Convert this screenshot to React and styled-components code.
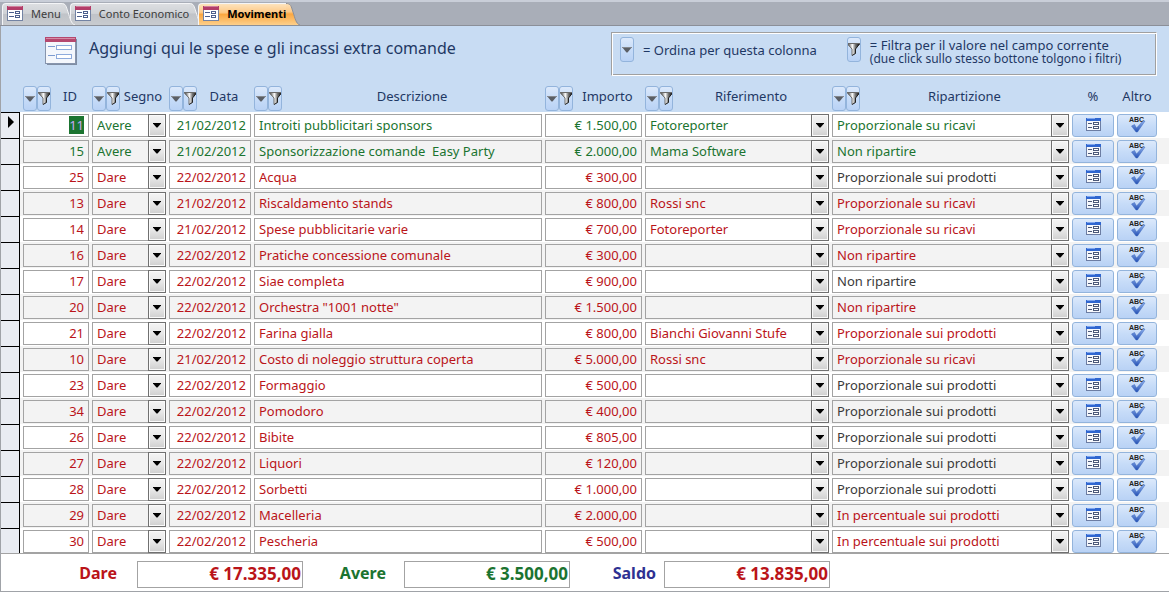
import React, { useId } from "react"
import styled, { createGlobalStyle, css } from "styled-components"

const colors = {
  page: "#ffffff",
  strip: "#a9aeb8",
  header: "#c8dcf3",
  navy: "#1f3864",
  red: "#ba1419",
  green: "#1b7430",
  violet: "#2e3192",
  dark: "#3a3a3a",
  line: "#a3a3a3",
  stripe: "#f3f3f3",
}

const columns = [
  { key: "id", label: "ID", width: 69 },
  { key: "segno", label: "Segno", width: 77 },
  { key: "data", label: "Data", width: 85 },
  { key: "descrizione", label: "Descrizione" },
  { key: "importo", label: "Importo", width: 100 },
  { key: "riferimento", label: "Riferimento", width: 187 },
  { key: "ripartizione", label: "Ripartizione", width: 240 },
]

const RICAVI = "Proporzionale su ricavi"
const PRODOTTI = "Proporzionale sui prodotti"
const NON = "Non ripartire"
const PERCENTUALE = "In percentuale sui prodotti"

// id, segno, data, descrizione, importo, riferimento, ripartizione, colour of ripartizione
const rows = [
  [11, "Avere", "21/02/2012", "Introiti pubblicitari sponsors", "€ 1.500,00", "Fotoreporter", RICAVI, "green"],
  [15, "Avere", "21/02/2012", "Sponsorizzazione comande  Easy Party", "€ 2.000,00", "Mama Software", NON, "green"],
  [25, "Dare", "22/02/2012", "Acqua", "€ 300,00", "", PRODOTTI, "dark"],
  [13, "Dare", "21/02/2012", "Riscaldamento stands", "€ 800,00", "Rossi snc", RICAVI, "red"],
  [14, "Dare", "21/02/2012", "Spese pubblicitarie varie", "€ 700,00", "Fotoreporter", RICAVI, "red"],
  [16, "Dare", "22/02/2012", "Pratiche concessione comunale", "€ 300,00", "", NON, "red"],
  [17, "Dare", "22/02/2012", "Siae completa", "€ 900,00", "", NON, "dark"],
  [20, "Dare", "22/02/2012", 'Orchestra "1001 notte"', "€ 1.500,00", "", NON, "red"],
  [21, "Dare", "22/02/2012", "Farina gialla", "€ 800,00", "Bianchi Giovanni Stufe", PRODOTTI, "red"],
  [10, "Dare", "21/02/2012", "Costo di noleggio struttura coperta", "€ 5.000,00", "Rossi snc", RICAVI, "red"],
  [23, "Dare", "22/02/2012", "Formaggio", "€ 500,00", "", PRODOTTI, "dark"],
  [34, "Dare", "22/02/2012", "Pomodoro", "€ 400,00", "", PRODOTTI, "dark"],
  [26, "Dare", "22/02/2012", "Bibite", "€ 805,00", "", PRODOTTI, "dark"],
  [27, "Dare", "22/02/2012", "Liquori", "€ 120,00", "", PRODOTTI, "dark"],
  [28, "Dare", "22/02/2012", "Sorbetti", "€ 1.000,00", "", PRODOTTI, "dark"],
  [29, "Dare", "22/02/2012", "Macelleria", "€ 2.000,00", "", PERCENTUALE, "red"],
  [30, "Dare", "22/02/2012", "Pescheria", "€ 500,00", "", PERCENTUALE, "red"],
]

const segni = ["Avere", "Dare"]
const riferimenti = ["", "Fotoreporter", "Mama Software", "Rossi snc", "Bianchi Giovanni Stufe"]
const ripartizioni = [RICAVI, PRODOTTI, NON, PERCENTUALE]

const totals = [
  { label: "Dare", value: "€ 17.335,00", color: "red", gap: 20 },
  { label: "Avere", value: "€ 3.500,00", color: "green", gap: 18 },
  { label: "Saldo", value: "€ 13.835,00", color: "violet", valueColor: "red", gap: 8 },
]

const FormIcon = () => (
  <svg width="16" height="15" viewBox="0 0 16 15" aria-hidden="true">
    <rect x="0.5" y="0.5" width="15" height="14" fill="#fff" stroke="#7383a3" />
    <rect x="0" y="0" width="16" height="4" fill="#b33c68" />
    <path d="M1 0.5h14" stroke="#cf7f9c" />
    <path d="M2 6.5h5M2 10.5h5" stroke="#4c5f8d" />
    <rect x="8.5" y="5.5" width="4" height="2" fill="#fff" stroke="#4c5f8d" />
    <rect x="8.5" y="9.5" width="4" height="2" fill="#fff" stroke="#4c5f8d" />
  </svg>
)

const SplitIcon = () => (
  <svg width="15" height="13" viewBox="0 0 15 13" aria-hidden="true">
    <rect x="0.5" y="0.5" width="14" height="12" fill="#f6f8fc" stroke="#6c7da3" />
    <rect x="0" y="0" width="15" height="3" fill="#2f66d0" />
    <path d="M1 0.5h8" stroke="#7fa6ee" />
    <path d="M2 5.5h4M2 9.5h4" stroke="#4b5878" />
    <rect x="7.5" y="4.5" width="5" height="2" fill="#fff" stroke="#4b5878" />
    <rect x="7.5" y="8.5" width="5" height="2" fill="#fff" stroke="#4b5878" />
  </svg>
)

const LargeFormIcon = () => (
  <svg width="32" height="28" viewBox="0 0 32 28" aria-hidden="true">
    <rect x="2" y="2" width="30" height="26" fill="#7f8da3" />
    <rect x="0.5" y="0.5" width="30" height="26" fill="#f4f7fc" stroke="#8795ad" />
    <rect x="0" y="0" width="31" height="5" fill="#b5486f" />
    <path d="M1 1.5h29" stroke="#d58ba6" />
    <path d="M3 9.5h7M3 18.5h7" stroke="#7c9bd0" />
    <rect x="11.5" y="8.5" width="15" height="4" fill="#fff" stroke="#8eabdc" />
    <rect x="11.5" y="17.5" width="15" height="4" fill="#fff" stroke="#8eabdc" />
  </svg>
)

const SortIcon = () => (
  <svg width="10" height="6" viewBox="0 0 10 6" aria-hidden="true">
    <path d="M0 0h10L5.5 5.5h-1z" fill="#5b5f66" />
    <path d="M0 0.5h10" stroke="#85898f" />
  </svg>
)

const FunnelIcon = () => {
  const id = useId()
  return (
    <svg width="13" height="13" viewBox="0 0 13 13" aria-hidden="true">
      <defs>
        <linearGradient id={id}>
          <stop offset="0.1" stopColor="#666" />
          <stop offset="0.4" stopColor="#fff" />
          <stop offset="0.65" stopColor="#777" />
          <stop offset="1" stopColor="#111" />
        </linearGradient>
      </defs>
      <path d="M0.5 0.5h12v1L8.5 6v4.5L5 12.5V6L0.5 1.500z" fill={`url(#${id})`} />
      <path d="M0 0.5h13M0.5 1l4.500 5v6.5" fill="none" stroke="#6a6a6a" />
      <path d="M5 12.500l3.5-2V6L12.5 1" fill="none" stroke="#222" />
    </svg>
  )
}

const ArrowIcon = () => (
  <svg width="8" height="5" viewBox="0 0 8 5" aria-hidden="true">
    <path d="M0 0h8v0.500L4.500 4.500h-1L0 0.500z" fill="#000" />
  </svg>
)

const AbcIcon = () => {
  const id = useId()
  return (
    <svg width="18" height="17" viewBox="0 0 18 17" aria-hidden="true">
      <defs>
        <linearGradient id={id} x2="0" y2="1">
          <stop offset="0" stopColor="#8fb2ee" />
          <stop offset="1" stopColor="#2450b4" />
        </linearGradient>
      </defs>
      <text x="1" y="6" fontFamily="Liberation Sans, sans-serif" fontSize="7" fontWeight="700" fill="#222">
        ABC
      </text>
      <path d="M3.500 10l3-1.5L8.5 12l6.500-7h2L9.500 16h-1.500z" fill={`url(#${id})`} stroke="#3f68bd" strokeWidth="0.5" />
    </svg>
  )
}

const Tab = ({ label, active }) => {
  const id = useId()
  return (
    <TabButton type="button" role="tab" aria-selected={!!active}>
      <TabBody active={active}>
        <FormIcon />
        {label}
      </TabBody>
      <svg width="14" height="22" viewBox="0 0 14 22" aria-hidden="true">
        <defs>
          <linearGradient id={id} x2="0" y2="1">
            {(active ? activeStops : idleStops).map(([offset, color]) => (
              <stop key={offset} offset={offset} stopColor={color} />
            ))}
          </linearGradient>
        </defs>
        <path d="M0 0C5 0 5 3 7 9s3 12 7 13H0z" fill={`url(#${id})`} />
        <path d="M0 0.5C5 0.5 5 3 7 9s3 12 7 13" fill="none" stroke={active ? "#8b8f98" : "#f4f5f7"} />
      </svg>
    </TabButton>
  )
}

const Combo = ({ value, options, color, label }) => (
  <ComboBox>
    <Select defaultValue={value} textColor={color} aria-label={label}>
      {options.map(option => (
        <option key={option}>{option}</option>
      ))}
    </Select>
    <ComboArrow>
      <ArrowIcon />
    </ComboArrow>
  </ComboBox>
)

const ColumnTools = ({ label }) => (
  <Tools>
    <ToolButton type="button" aria-label={`Ordina per ${label}`}>
      <SortIcon />
    </ToolButton>
    <ToolButton type="button" aria-label={`Filtra per ${label}`}>
      <FunnelIcon />
    </ToolButton>
  </Tools>
)

const Movement = ({ row, current }) => {
  const [id, segno, data, descrizione, importo, riferimento, ripartizione, shareColor] = row
  const color = segno === "Avere" ? "green" : "red"
  return (
    <Row>
      <Selector>
        {current && (
          <svg width="6" height="12" viewBox="0 0 6 12" aria-hidden="true">
            <path d="M0 0l6 6-6 6z" fill="#000" />
          </svg>
        )}
      </Selector>
      <Cell>
        <Field
          defaultValue={id}
          textColor={color}
          align="right"
          aria-label="ID"
          autoFocus={current}
          onFocus={e => e.target.select()}
        />
      </Cell>
      <Cell>
        <Combo value={segno} options={segni} color={color} label="Segno" />
      </Cell>
      <Cell>
        <Field defaultValue={data} textColor={color} align="right" aria-label="Data" />
      </Cell>
      <Cell>
        <Field defaultValue={descrizione} textColor={color} aria-label="Descrizione" />
      </Cell>
      <Cell>
        <Field defaultValue={importo} textColor={color} align="right" aria-label="Importo" />
      </Cell>
      <Cell>
        <Combo value={riferimento} options={riferimenti} color={color} label="Riferimento" />
      </Cell>
      <Cell>
        <Combo value={ripartizione} options={ripartizioni} color={shareColor} label="Ripartizione" />
      </Cell>
      <Cell>
        <ActionButton type="button" aria-label="Percentuali">
          <SplitIcon />
        </ActionButton>
      </Cell>
      <Cell>
        <ActionButton type="button" aria-label="Altro">
          <AbcIcon />
        </ActionButton>
      </Cell>
      <td />
    </Row>
  )
}

const App = () => {
  return (
    <>
      <GlobalStyle />
      <TabStrip role="tablist">
        <Tab label="Menu" />
        <Tab label="Conto Economico" />
        <Tab label="Movimenti" active />
      </TabStrip>
      <Main>
        <Header>
          <LargeFormIcon />
          <Title>Aggiungi qui le spese e gli incassi extra comande</Title>
          <Legend>
            <ToolButton type="button" aria-label="Ordina">
              <SortIcon />
            </ToolButton>
            <LegendText>= Ordina per questa colonna</LegendText>
            <ToolButton type="button" aria-label="Filtra">
              <FunnelIcon />
            </ToolButton>
            <LegendNote>
              <span>= Filtra per il valore nel campo corrente</span>
              <small>(due click sullo stesso bottone tolgono i filtri)</small>
            </LegendNote>
          </Legend>
        </Header>
        <Table>
          <colgroup>
            <Col size={19} />
            {columns.map(({ key, width }) => (
              <Col key={key} size={width} />
            ))}
            <Col size={45} />
            <Col size={43} />
            <Col size={12} />
          </colgroup>
          <thead>
            <tr>
              <HeadCell />
              {columns.map(({ key, label }) => (
                <HeadCell key={key} scope="col">
                  <HeadContent>
                    <ColumnTools label={label} />
                    <HeadLabel>{label}</HeadLabel>
                  </HeadContent>
                </HeadCell>
              ))}
              <HeadCell scope="col">
                <HeadContent>
                  <HeadLabel>%</HeadLabel>
                </HeadContent>
              </HeadCell>
              <HeadCell scope="col">
                <HeadContent>
                  <HeadLabel>Altro</HeadLabel>
                </HeadContent>
              </HeadCell>
              <HeadCell />
            </tr>
          </thead>
          <tbody>
            {rows.map((row, i) => (
              <Movement key={row[0]} row={row} current={i === 0} />
            ))}
          </tbody>
        </Table>
        <Footer>
          {totals.map(({ label, value, color, valueColor, gap }) => (
            <Total key={label} textColor={color} gap={gap}>
              <TotalLabel>{label}</TotalLabel>
              <TotalField readOnly value={value} textColor={valueColor || color} />
            </Total>
          ))}
        </Footer>
      </Main>
    </>
  )
}

export default App

const activeStops = [
  [0, "#fde3bd"],
  [0.4, "#fdc987"],
  [0.5, "#fba740"],
  [1, "#fdd08c"],
]

const idleStops = [
  [0, "#dcdee1"],
  [0.45, "#cfd2d6"],
  [0.5, "#c0c3c8"],
  [1, "#c8cbcf"],
]

const toGradient = stops => stops.map(([offset, color]) => `${color} ${offset * 100}%`).join(", ")

// keeps styling props off the DOM nodes
const hide = (...names) => ({ shouldForwardProp: prop => !names.includes(prop) })

const GlobalStyle = createGlobalStyle`
  *, *::before, *::after {
    box-sizing: border-box;
  }

  body {
    margin: 0;
    background: ${colors.page};
    color: ${colors.navy};
    font-family: "Noto Sans", "Open Sans", sans-serif;
    font-size: 13px;
  }

  button, input, select {
    font: inherit;
  }

  svg {
    display: block;
    flex: none;
  }
`

const TabStrip = styled.div`
  display: flex;
  align-items: flex-end;
  height: 26px;
  padding-left: 2px;
  background: ${colors.strip};
  border-top: 2px solid #c9ced8;
  border-bottom: 1px solid #8b8f98;
`

const TabButton = styled.button`
  display: flex;
  height: 22px;
  padding: 0;
  border: 0;
  background: none;
  margin-right: -5px;

  &:first-child {
    z-index: 1;
  }
`

const TabBody = styled.span.withConfig(hide("active"))`
  display: flex;
  align-items: center;
  gap: 8px;
  height: 22px;
  padding: 0 0 2px 4px;
  border: 1px solid #f4f5f7;
  border-width: 1px 0 0 1px;
  border-radius: 4px 0 0 0;
  background: linear-gradient(${props => toGradient(props.active ? activeStops : idleStops)});
  color: ${props => (props.active ? "#000" : "#3d3d3d")};
  font-size: 11px;
  font-weight: ${props => (props.active ? 700 : 400)};
  white-space: nowrap;
`

const Main = styled.main`
  border: 1px solid #a0a3a8;
  border-width: 0 0 1px 1px;
`

const Header = styled.header`
  display: flex;
  align-items: flex-start;
  gap: 12px;
  height: 58px;
  padding: 6px 12px 0 44px;
  background: ${colors.header};

  > svg {
    margin-top: 5px;
  }
`

const Title = styled.h1`
  margin: 4px auto 0 0;
  font-size: 16px;
  line-height: 24px;
  font-weight: 400;
  white-space: nowrap;
`

const Legend = styled.section`
  display: flex;
  flex: none;
  gap: 9px;
  width: 546px;
  height: 44px;
  padding: 4px 8px;
  border: 1px solid;
  border-color: #a0a0a0 #fff #fff #a0a0a0;
  box-shadow: inset 1px 1px #fff, inset -1px -1px #a0a0a0;
`

const LegendText = styled.p`
  flex: none;
  margin: 0 21px 0 0;
  line-height: 26px;
  white-space: nowrap;
`

const LegendNote = styled.p`
  display: flex;
  flex-direction: column;
  flex: none;
  margin: 0;
  line-height: 16px;
  white-space: nowrap;

  small {
    font-size: 12px;
    line-height: 12px;
  }
`

const raised = css`
  display: flex;
  align-items: center;
  justify-content: center;
  padding: 0;
  border: 1px solid #93b4dc;
  border-radius: 3px;
  background: linear-gradient(#dce9fb, #c7dcf8 50%, #b9d2f5);
`

const ToolButton = styled.button`
  ${raised}
  width: 14px;
  height: 25px;
  overflow: hidden;
`

const Tools = styled.span`
  display: flex;
  flex: none;
`

const Table = styled.table`
  width: 100%;
  table-layout: fixed;
  border-collapse: separate;
  border-spacing: 0;
`

const Col = styled.col.withConfig(hide("size"))`
  width: ${props => (props.size ? `${props.size}px` : "auto")};
`

const HeadCell = styled.th`
  height: 28px;
  padding: 1px 0 0 3px;
  background: ${colors.header};
  font-weight: 400;
`

const HeadContent = styled.span`
  display: flex;
  height: 25px;
`

const HeadLabel = styled.span`
  flex: 1;
  line-height: 20px;
`

const Row = styled.tr`
  height: 26px;

  &:nth-child(even) {
    background: ${colors.stripe};
  }
`

const Selector = styled.td`
  padding: 0 0 8px 7px;
  border: solid #000;
  border-width: 1px 1px 0 0;
  background: #e9ecf2;
`

const Cell = styled.td`
  padding: 2px 0 1px 3px;
`

const Field = styled.input.withConfig(hide("textColor", "align"))`
  display: block;
  width: 100%;
  height: 23px;
  padding: 0 4px 1px;
  border: 1px solid ${colors.line};
  border-radius: 0;
  outline: 0;
  background: transparent;
  color: ${props => colors[props.textColor]};
  text-align: ${props => props.align || "left"};

  &::selection {
    background: ${colors.green};
    color: #c9a8f8;
  }
`

const ComboBox = styled.div`
  display: grid;
  align-items: center;
`

const Select = styled.select.withConfig(hide("textColor"))`
  grid-area: 1 / 1;
  width: 100%;
  height: 23px;
  padding: 0 20px 1px 4px;
  appearance: none;
  border: 1px solid ${colors.line};
  border-radius: 0;
  background: transparent;
  color: ${props => colors[props.textColor]};
`

const ComboArrow = styled.span`
  grid-area: 1 / 1;
  justify-self: end;
  display: flex;
  align-items: center;
  justify-content: center;
  width: 18px;
  height: 23px;
  border: 1px solid #707070;
  background: linear-gradient(#f4f4f4, #e8e8e8 50%, #cfcfcf);
  box-shadow: inset 0 0 0 1px #fafafa;
  pointer-events: none;
`

const ActionButton = styled.button`
  ${raised}
  align-items: flex-start;
  width: 100%;
  height: 23px;
  padding-top: 1px;

  svg[height="13"] {
    margin-top: 2px;
  }
`

const Footer = styled.footer`
  display: flex;
  gap: 34px;
  margin-top: -1px;
  padding: 7px 0 3px 67px;
  border-top: 1px solid ${colors.line};
`

const Total = styled.label.withConfig(hide("textColor", "gap"))`
  display: flex;
  gap: ${props => props.gap}px;
  color: ${props => colors[props.textColor]};
  font-size: 16px;
  line-height: 24px;
  font-weight: 700;
`

const TotalLabel = styled.span`
  min-width: 49px;
  text-align: right;

  label:last-child & {
    min-width: 52px;
  }
`

const TotalField = styled.input.withConfig(hide("textColor"))`
  width: 166px;
  height: 27px;
  padding: 0 1px 2px;
  border: 1px solid ${colors.line};
  border-radius: 0;
  background: transparent;
  color: ${props => colors[props.textColor]};
  font-size: 17px;
  text-align: right;
`
